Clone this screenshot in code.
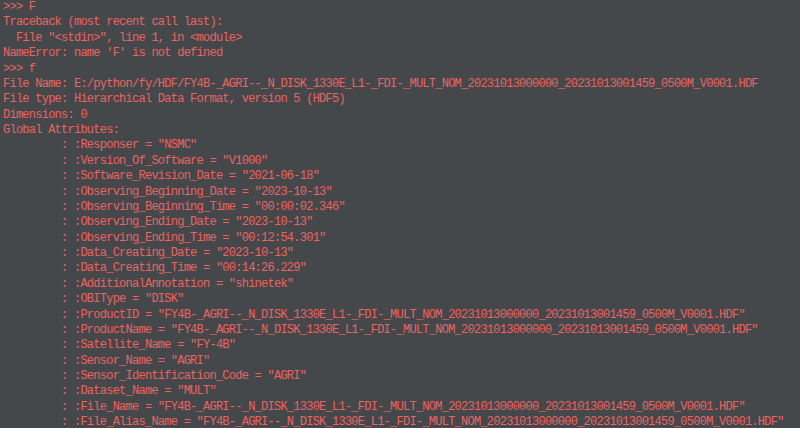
import React from "react";

const fileBase = "FY4B-_AGRI--_N_DISK_1330E_L1-_FDI-_MULT_NOM_20231013000000_20231013001459_0500M_V0001.HDF";
const pad = "         ";

// attributes printed by the reader
const attrs = [
  ["Responser", "NSMC"],
  ["Version_Of_Software", "V1000"],
  ["Software_Revision_Date", "2021-06-18"],
  ["Observing_Beginning_Date", "2023-10-13"],
  ["Observing_Beginning_Time", "00:00:02.346"],
  ["Observing_Ending_Date", "2023-10-13"],
  ["Observing_Ending_Time", "00:12:54.301"],
  ["Data_Creating_Date", "2023-10-13"],
  ["Data_Creating_Time", "00:14:26.229"],
  ["AdditionalAnnotation", "shinetek"],
  ["OBIType", "DISK"],
  ["ProductID", fileBase],
  ["ProductName", fileBase],
  ["Satellite_Name", "FY-4B"],
  ["Sensor_Name", "AGRI"],
  ["Sensor_Identification_Code", "AGRI"],
  ["Dataset_Name", "MULT"],
  ["File_Name", fileBase],
  ["File_Alias_Name", fileBase],
];

const lines = [
  ">>> F",
  "Traceback (most recent call last):",
  '  File "<stdin>", line 1, in <module>',
  "NameError: name 'F' is not defined",
  ">>> f",
  "File Name: E:/python/fy/HDF/" + fileBase,
  "File type: Hierarchical Data Format, version 5 (HDF5)",
  "Dimensions: 0",
  "Global Attributes:",
  ...attrs.map(([k, v]) => `${pad}: :${k} = "${v}"`),
];

export default function App() {
  return (
    <div className="w-[800px] h-[428px] overflow-hidden bg-[#45484b] pl-[3px]">
      <div className="font-['Liberation_Mono',monospace] text-[12px] leading-[15.37px] tracking-[-0.75px] text-[#ec6361] whitespace-pre">
        {lines.map((l, i) => (
          <div key={i}>{l}</div>
        ))}
      </div>
    </div>
  );
}
